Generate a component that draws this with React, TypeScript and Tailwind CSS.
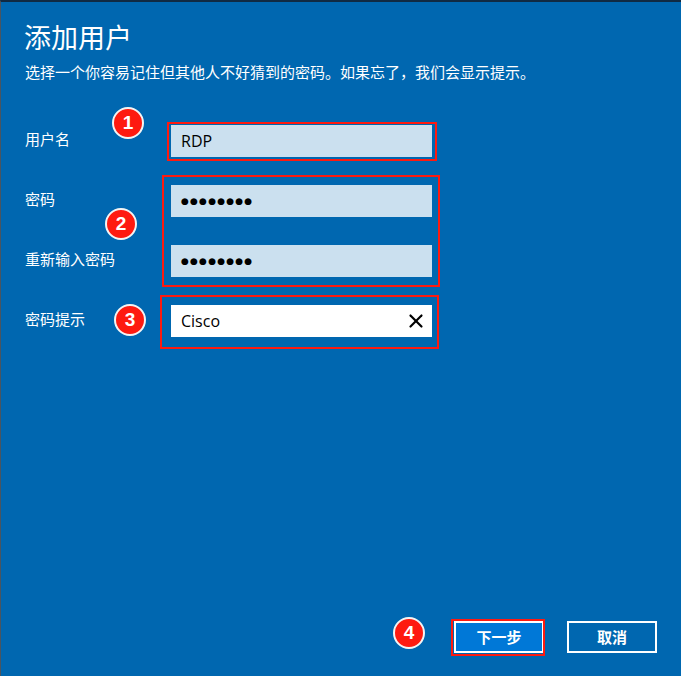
import React from 'react';
import { X } from 'lucide-react';

const font = "font-['Open_Sans','Noto_Sans_CJK_SC',sans-serif]";

const Badge: React.FC<{ n: number; className: string }> = ({ n, className }) => (
  <div className={`absolute flex h-[32px] w-[32px] items-center justify-center rounded-full border-2 border-[#f4f4f4] bg-[#fe1a10] text-[19px] font-bold text-white font-['Liberation_Sans',sans-serif] ${className}`}>
    {n}
  </div>
);

const Row: React.FC<{ label: string; children: React.ReactNode }> = ({ label, children }) => (
  <div className="flex h-[32px] items-center">
    <div className="w-[146px] pb-[3px] text-[15px] text-white">{label}</div>
    {children}
  </div>
);

const Dots = () => (
  <div className="flex h-full w-[261px] items-center bg-[#cbe0ef] pt-[2px] pl-[10px] font-['DejaVu_Sans',sans-serif] text-[9px] tracking-[1.2px] text-black">
    ●●●●●●●●
  </div>
);

export default function App() {
  return (
    <div className={`relative flex h-[676px] w-[681px] flex-col overflow-hidden border-t-2 border-l border-t-[#102a43] border-l-[#4a5560] bg-[#0067b0] pl-[24px] ${font}`}>
      <h1 className="mt-[18px] -ml-px text-[27px] leading-[36px] text-white">添加用户</h1>
      <p className="mt-[6px] text-[15px] leading-[20px] text-white">{'选择一个你容易记住但其他人不好猜到的密码。如果忘了\uFF0C我们会显示提示。'}</p>

      <div className="mt-[43px] flex flex-col gap-[28px]">
        <Row label="用户名">
          <div className="flex h-full w-[261px] items-center bg-[#cbe0ef] pl-[10px] text-[16px] text-black">RDP</div>
        </Row>
        <Row label="密码"><Dots /></Row>
        <Row label="重新输入密码"><Dots /></Row>
        <Row label="密码提示">
          <div className="flex h-full w-[261px] items-center justify-between bg-white pr-[5px] pl-[10px] text-[16px] text-black">
            Cisco
            <X size={22} strokeWidth={2.4} />
          </div>
        </Row>
      </div>

      <div className="mt-auto mb-[23px] flex justify-end gap-[23px] pr-[24px]">
        <button className="h-[32px] w-[90px] border-2 border-white bg-[#0078d7] text-[15px] font-bold text-white">下一步</button>
        <button className="h-[32px] w-[90px] border-2 border-white text-[15px] font-bold text-white">取消</button>
      </div>

      {/* annotations on top of the screenshot */}
      <div className="absolute top-[120px] left-[166px] h-[39px] w-[270px] border-2 border-[#fe1a10]" />
      <div className="absolute top-[173px] left-[161px] h-[112px] w-[278px] border-2 border-[#fe1a10]" />
      <div className="absolute top-[293px] left-[159px] h-[54px] w-[279px] border-2 border-[#fe1a10]" />
      <div className="absolute top-[617px] left-[450px] h-[37px] w-[94px] border-2 border-[#fe1a10]" />
      <Badge n={1} className="top-[105px] left-[111px]" />
      <Badge n={2} className="top-[206px] left-[104px]" />
      <Badge n={3} className="top-[302px] left-[113px]" />
      <Badge n={4} className="top-[615px] left-[392px]" />
    </div>
  );
}
